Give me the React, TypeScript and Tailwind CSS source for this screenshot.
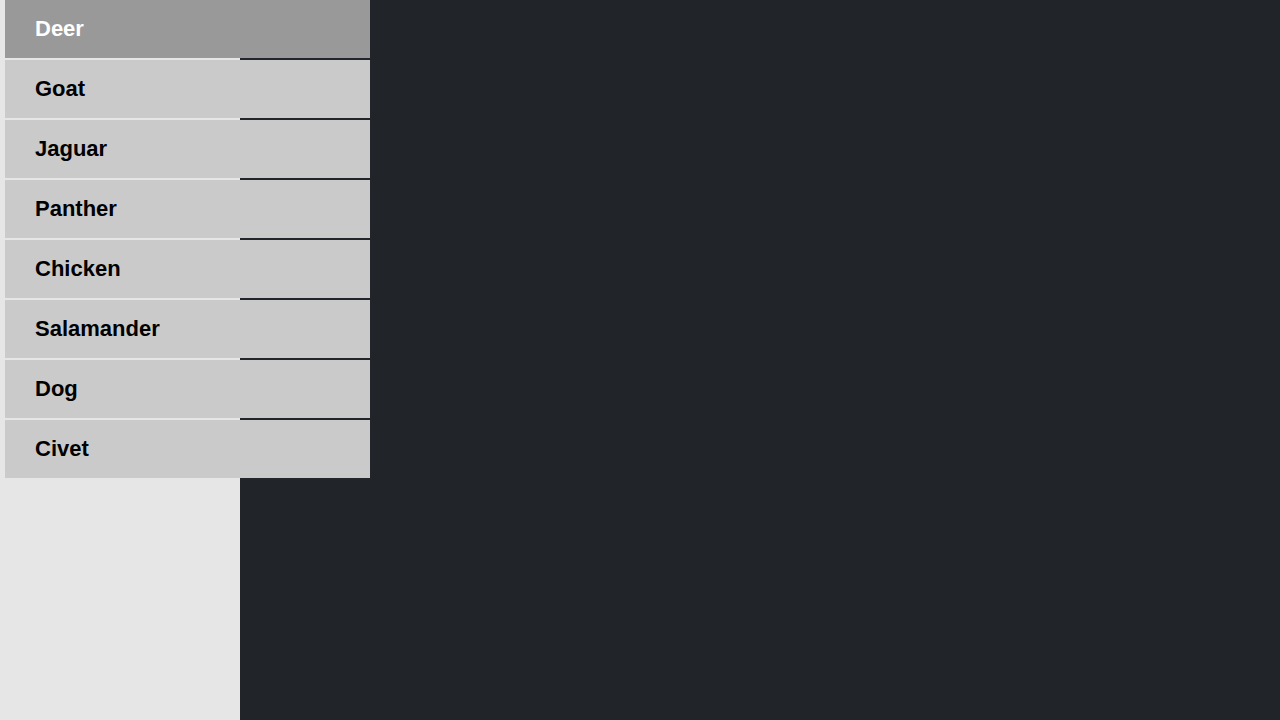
import React from 'react';

const animals = ['Deer', 'Goat', 'Jaguar', 'Panther', 'Chicken', 'Salamander', 'Dog', 'Civet'];

export default function App() {
  const [active, setActive] = React.useState(0);

  return (
    <div className="flex h-[720px] w-[1280px] bg-[#212529] font-['Liberation_Sans',Arial,sans-serif]">
      {/* Sidebar */}
      <aside className="relative h-full w-[240px] shrink-0 bg-[#e6e6e6]">
        {/* Menu list overflows the sidebar */}
        <ul className="absolute left-[5px] top-0 flex w-[365px] flex-col gap-[2px]">
          {animals.map((name, i) => (
            <li
              key={name}
              onClick={() => setActive(i)}
              className={
                i === active
                  ? 'flex h-[58px] cursor-pointer items-center bg-[#999999] pb-[1px] pl-[30px] text-[22px] font-bold text-white'
                  : 'flex h-[58px] cursor-pointer items-center bg-[#cacaca] pb-[1px] pl-[30px] text-[22px] font-bold text-black'
              }
            >
              {name}
            </li>
          ))}
        </ul>
      </aside>
      <main className="flex-1" />
    </div>
  );
}
